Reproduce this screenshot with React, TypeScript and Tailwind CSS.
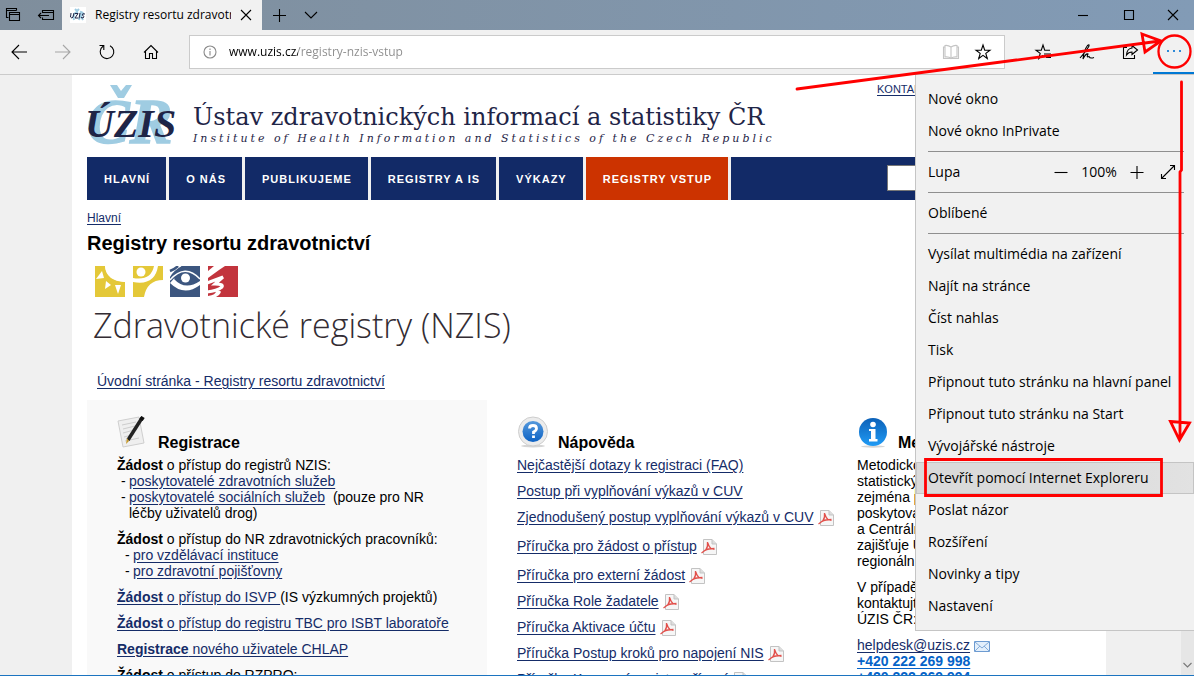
import React from "react";

const ui = "font-['Open_Sans','Noto_Sans',sans-serif]";
const link = "text-[#152c68] underline underline-offset-2";

function Glyph({ children, size = 20, className = "" }: { children: React.ReactNode; size?: number; className?: string }) {
  return (
    <svg
      width={size}
      height={size}
      viewBox={`0 0 ${size} ${size}`}
      fill="none"
      stroke="currentColor"
      strokeWidth="1.1"
      className={`shrink-0 ${className}`}
      aria-hidden="true"
    >
      {children}
    </svg>
  );
}

function IconButton({ label, className = "", children }: { label: string; className?: string; children: React.ReactNode }) {
  return (
    <button type="button" aria-label={label} className={`flex shrink-0 items-center justify-center text-black ${className}`}>
      {children}
    </button>
  );
}

function TabBar() {
  return (
    <div className="flex h-[30px] shrink-0 items-stretch bg-linear-to-r from-[#7f8e9c] to-[#829bb6]">
      <IconButton label="Odložené karty" className="w-[26px]">
        <Glyph size={16}>
          <path d="M3.500 10.500H1.500V1.500H11.500V3.500M1.500 3.500H11.500" />
          <path d="M4.500 5.500H14.500V13.500H4.500ZM4.500 7.500H14.500" />
        </Glyph>
      </IconButton>
      <IconButton label="Odložit karty" className="w-[36px] pl-1">
        <Glyph size={18}>
          <path d="M5.500 7V4.500H16.500V13.500H5.500V11.500M5.500 6.500H16.500M12 9.500H1.500M4 7L1.500 9.500L4 12" />
        </Glyph>
      </IconButton>
      <div className="flex w-[200px] items-center bg-[#f1f1f1] pl-2 pr-[10px]">
        <svg width="16" height="16" viewBox="0 0 16 16" className="shrink-0" aria-hidden="true">
          <rect width="16" height="16" fill="#fff" />
          <path d="M5 2L7 4L9 2" stroke="#9fcce2" strokeWidth="2" fill="none" />
          <path d="M4 13Q2 6 8 5M9 13L11 5Q15 6 11 9L13 13" stroke="#9fcce2" strokeWidth="2" fill="none" />
          <path d="M1 6L.5 10Q2 12 3 10L4 6M5 6.500H8L5 11H8M10 6L9 11.500M15 7Q12 6 12.500 8Q15 10 13 11L11 10.500" stroke="#1f2547" fill="none" />
        </svg>
        <span className="ml-[9px] w-[136px] overflow-hidden whitespace-nowrap text-xs text-black">Registry resortu zdravotnictví</span>
        <IconButton label="Zavřít kartu" className="ml-auto w-3">
          <Glyph size={12}><path d="M1 1L11 11M11 1L1 11" /></Glyph>
        </IconButton>
      </div>
      <IconButton label="Nová karta" className="w-[34px]">
        <Glyph size={14}><path d="M7.500 1V14M1 7.500H14" /></Glyph>
      </IconButton>
      <IconButton label="Náhledy karet" className="w-[30px]">
        <Glyph size={14}><path d="M1 4L7 10L13 4" /></Glyph>
      </IconButton>
      <div className="ml-auto flex">
        <IconButton label="Minimalizovat" className="w-[46px]">
          <Glyph size={12}><path d="M1 6.500H11" /></Glyph>
        </IconButton>
        <IconButton label="Maximalizovat" className="w-[46px]">
          <Glyph size={12}><path d="M1.500 1.500H10.500V10.500H1.500Z" /></Glyph>
        </IconButton>
        <IconButton label="Zavřít" className="w-[42px]">
          <Glyph size={12}><path d="M1 1L11 11M11 1L1 11" /></Glyph>
        </IconButton>
      </div>
    </div>
  );
}

function Toolbar() {
  return (
    <div className="flex h-[45px] shrink-0 items-center border-b border-[#cbcbcb] bg-[#f1f1f1]">
      <IconButton label="Zpět" className="w-[41px] pr-[3px]">
        <Glyph size={18}><path d="M2 9H17M9 2L2 9L9 16" /></Glyph>
      </IconButton>
      <IconButton label="Vpřed" className="w-11">
        <Glyph size={18} className="text-[#a6a6a6]"><path d="M1 9H16M9 2L16 9L9 16" /></Glyph>
      </IconButton>
      <IconButton label="Aktualizovat" className="w-11">
        <Glyph size={18}><path d="M5 3.300A6.800 6.800 0 1 0 12 2.700M1.500 2.500H5.800V7" /></Glyph>
      </IconButton>
      <IconButton label="Domů" className="w-11">
        <Glyph size={18}><path d="M2 9.500L9 2.500L16 9.500M3.500 8V15.500H7.500V10.500H10.500V15.500H14.500V8" /></Glyph>
      </IconButton>
      <div className="ml-4 flex h-[34px] min-w-0 flex-1 items-center border border-[#cbcbcb] bg-white">
        <Glyph size={14} className="ml-[13px] text-[#8a8a8a]">
          <circle cx="7" cy="7" r="6" /><path d="M7 6V10.500M7 3.500V5" />
        </Glyph>
        <input
          type="text"
          aria-label="Adresa"
          defaultValue="www.uzis.cz/registry-nzis-vstup"
          className="ml-3 min-w-0 flex-1 bg-[linear-gradient(90deg,#000_69px,#8c8c8c_69px)] bg-clip-text text-xs text-transparent caret-black outline-none"
        />
        <IconButton label="Zobrazení pro čtení" className="w-8">
          <Glyph size={18} className="text-[#c4c4c4]">
            <path d="M9 4V15.500M9 4Q6 2 3 2.500V14Q7 13.500 9 15.500Q11 13.500 15 14V2.500Q12 2 9 4M3 4H1.500V15.500H16.500V4H15" />
          </Glyph>
        </IconButton>
        <IconButton label="Přidat k oblíbeným" className="mr-[5px] w-8">
          <Glyph size={18}><path d="M9 2L10.700 7.200H16L11.800 10.400L13.300 15.500L9 12.400L4.700 15.500L6.200 10.400L2 7.200H7.300Z" /></Glyph>
        </IconButton>
      </div>
      <div className="flex items-center self-stretch pl-4">
        <IconButton label="Centrum" className="w-11">
          <Glyph size={18}><path d="M16 7.200H10.700L9 2L7.300 7.200H2L6.200 10.400L4.700 15.500L9 12.400M10 11H17M12 14.500H17" /></Glyph>
        </IconButton>
        <IconButton label="Poznámky" className="w-11">
          <Glyph size={18}><path d="M2 15Q9 7 11 3Q11.500 1 9.500 2.500Q6 7 5 16Q8 10 10 11Q8 15 11 13.500Q12 16 16 14.500" /></Glyph>
        </IconButton>
        <IconButton label="Sdílet" className="w-11">
          <Glyph size={18}><path d="M5 4.500H1.500V15.500H12.500V12M10 2.500L15.500 7L10 11.500V9Q6.500 9 4.500 12Q5 5.500 10 5Z" /></Glyph>
        </IconButton>
        <button type="button" aria-label="Nastavení a další" className="mt-2 flex w-[41px] items-center justify-center self-stretch border-b-2 border-[#0078d4] pb-1 text-[#2f8ad8]">
          <Glyph size={16}><path d="M1 6H3M7 6H9M13 6H15" strokeWidth="2" /></Glyph>
        </button>
      </div>
    </div>
  );
}

function Brand() {
  return (
    <div className="flex pt-2">
      <svg width="96" height="64" viewBox="0 0 96 64" className="shrink-0" role="img" aria-label="ÚZIS ČR" fontFamily="Liberation Serif" fontWeight="700" fontStyle="italic">
        <text x="0" y="60" fontSize="64" fill="#9fcce2" stroke="#9fcce2" strokeWidth="1.5">CR</text>
        <path d="M23 2L31 15H37L45 2H39L34 8L30 2Z" fill="#9fcce2" />
        <text x="-2" y="54" fontSize="40" fill="#1f2547">ÚZIS</text>
      </svg>
      <div className="ml-[10px] whitespace-nowrap pt-[18px] font-['DejaVu_Serif',serif] text-[#1f2547]">
        <div className="text-2xl leading-8">Ústav zdravotnických informací a statistiky ČR</div>
        <div className="text-[11px] italic leading-3 tracking-[3px]">Institute of Health Information and Statistics of the Czech Republic</div>
      </div>
    </div>
  );
}

const nav = [
  { text: "HLAVNÍ" },
  { text: "O NÁS" },
  { text: "PUBLIKUJEME" },
  { text: "REGISTRY A IS" },
  { text: "VÝKAZY" },
  { text: "REGISTRY VSTUP", active: true },
];

function SiteNav() {
  return (
    <nav className="flex h-[43px] gap-[3px] bg-[#f1f1f1] text-[11px] font-bold tracking-[1px] text-white">
      {nav.map((n) => (
        <a key={n.text} href="#" className={`flex shrink-0 items-center pl-[17px] pr-4 ${n.active ? "bg-[#cc3300]" : "bg-[#122a67]"}`}>
          {n.text}
        </a>
      ))}
      <div className="flex flex-1 justify-end bg-[#122a67] py-2 pr-8">
        <input aria-label="Hledat" className="h-[26px] w-[172px] border border-[#777] bg-white" />
      </div>
    </nav>
  );
}

function Pictograms() {
  return (
    <svg width="144" height="31" viewBox="0 0 144 31" aria-hidden="true">
      <path d="M0 0H10Q11 14 30 16V31H0Z" fill="#e4c838" />
      <path d="M7 5L1 13L9 12ZM11 15L10 23L16 19ZM20 19L23 28L26 19Z" fill="#fff" />
      <path d="M10 0Q11 15 30 16V0Z" fill="#fff" />
      <path d="M38 0H68V14Q52 14 49 31H38Z" fill="#e4c838" />
      <circle cx="46" cy="6" r="4.500" fill="#fff" />
      <path d="M38 12Q56 15 59 0H63Q60 20 38 16Z" fill="#fff" />
      <path d="M75 0H105V31H75Z" fill="#3c567f" />
      <path d="M75 0H87Q79 4 75 11Z" fill="#fff" />
      <path d="M75 5Q80 3 83 0" stroke="#3c567f" strokeWidth="2.500" fill="none" />
      <path d="M87 0H105V11Q94 0 81 6Q84 2 87 0Z" fill="#3c567f" />
      <path d="M75 17Q82 9 79 13Q90 25 105 15V19Q89 31 75 17Z" fill="#fff" />
      <path d="M75 14Q90 -3 105 13" stroke="#fff" strokeWidth="1.500" fill="none" />
      <circle cx="90.500" cy="12" r="4.500" fill="#fff" />
      <path d="M113 0H143V31H113Z" fill="#c2343d" />
      <path d="M119 0H130L124 4L113 12V5Z" fill="#fff" />
      <path d="M112 17L128 11L120 18Q129 18 127 21Q122 25 112 26" stroke="#fff" strokeWidth="3" fill="none" />
      <path d="M121 25Q129 24 124 29L121 31H113V30Q121 29 121 25Z" fill="#fff" />
    </svg>
  );
}

function NoteIcon() {
  return (
    <svg width="30" height="34" viewBox="0 0 30 34" aria-hidden="true">
      <path d="M1 5L22 1L27 27L6 31Z" fill="#efefef" stroke="#cfcfcf" />
      <path d="M5 9L19 6M6 13L18 10M6 17L17 14M7 21L15 19M8 25L22 22" stroke="#cdcdcd" />
      <path d="M11 24L25 2" stroke="#222" strokeWidth="3.500" />
      <path d="M24 4L26 1" stroke="#111" strokeWidth="4" />
      <path d="M12 25L9 28L10 22Z" fill="#c69a2d" />
    </svg>
  );
}

function HelpIcon() {
  return (
    <svg width="32" height="34" viewBox="0 0 32 34" aria-hidden="true">
      <defs>
        <linearGradient id="helpFill" x1="0" y1="0" x2="0" y2="1">
          <stop offset="0" stopColor="#5599dc" /><stop offset="1" stopColor="#0d62c4" />
        </linearGradient>
      </defs>
      <ellipse cx="16" cy="30" rx="12" ry="1.500" fill="#d5d5d5" />
      <circle cx="16" cy="15.500" r="14.500" fill="#ececec" stroke="#cecece" />
      <circle cx="16" cy="15.500" r="10.500" fill="url(#helpFill)" />
      <path d="M12.500 12.500Q12.500 9.500 16 9.500Q19.500 9.500 19.500 12.500Q19.500 14.500 16.500 16V18M16.500 19.500V22" stroke="#fff" strokeWidth="2.800" fill="none" />
    </svg>
  );
}

function InfoIcon() {
  return (
    <svg width="32" height="32" viewBox="0 0 32 32" aria-hidden="true">
      <defs>
        <linearGradient id="infoFill" x1="0" y1="0" x2="0" y2="1">
          <stop offset="0" stopColor="#0c61b8" /><stop offset="1" stopColor="#209bf5" />
        </linearGradient>
      </defs>
      <ellipse cx="16" cy="30.500" rx="12" ry="1.200" fill="#d5d5d5" />
      <circle cx="16" cy="16" r="14" fill="url(#infoFill)" />
      <circle cx="16" cy="8.500" r="2.800" fill="#fff" />
      <path d="M12 13H18.500V23H20.500V25.500H12V23H14V15H12Z" fill="#fff" />
    </svg>
  );
}

function PdfIcon() {
  return (
    <svg width="16" height="16" viewBox="0 0 16 16" className="-my-1 ml-1 inline-block align-middle" aria-hidden="true">
      <path d="M2.500 .5H11L15.500 5V15.500H2.500Z" fill="#f6f6f6" stroke="#c3c3c3" />
      <path d="M11 .5V5H15.500" fill="#ddd" stroke="#c3c3c3" />
      <path d="M6.500 3Q7 8 5 10.500Q2 13 .5 14M6.800 4Q8 8 10 9.500L13.500 10.500M4 11.500Q7 9.500 13.500 9.500" fill="none" stroke="#e2504b" strokeWidth="1.300" />
    </svg>
  );
}

function Column({ icon, title, className, children }: { icon: React.ReactNode; title: string; className: string; children: React.ReactNode }) {
  return (
    <section className={className}>
      <div className="flex h-[57px] pt-4">
        <div className="w-[41px] shrink-0">{icon}</div>
        <h2 className="pt-4 text-base font-bold leading-[22px]">{title}</h2>
      </div>
      <div className="flex flex-col gap-[10px]">{children}</div>
    </section>
  );
}

function SubItem({ text, className, tail }: { text: string; className: string; tail?: string }) {
  return (
    <li className={`flex ${className}`}>
      <span className="w-2 shrink-0">-</span>
      <span><a href="#" className={link}>{text}</a>{tail}</span>
    </li>
  );
}

const guides = [
  { text: "Nejčastější dotazy k registraci (FAQ)" },
  { text: "Postup při vyplňování výkazů v CUV" },
  { text: "Zjednodušený postup vyplňování výkazů v CUV", pdf: true, roomy: true },
  { text: "Příručka pro žádost o přístup", pdf: true, roomy: true },
  { text: "Příručka pro externí žádost", pdf: true },
  { text: "Příručka Role žadatele", pdf: true },
  { text: "Příručka Aktivace účtu", pdf: true },
  { text: "Příručka Postup kroků pro napojení NIS", pdf: true },
  { text: "Příručka Kmenový registr zařízení", pdf: true },
];

function Page() {
  return (
    <main className="ml-[72px] mr-[75px] min-w-0 flex-1 overflow-hidden bg-white px-[15px] font-['Liberation_Sans',Arial,sans-serif] text-sm leading-4 text-black">
      <div className="flex h-[82px] justify-between">
        <Brand />
        <a href="#" className={`w-[214px] shrink-0 pt-[6px] text-[11px] ${link}`}>KONTAKTY</a>
      </div>
      <SiteNav />
      <div className="pt-[10px] text-xs leading-4"><a href="#" className={link}>Hlavní</a></div>
      <h1 className="pt-[5px] text-xl font-bold leading-6">Registry resortu zdravotnictví</h1>
      <div className="pl-2 pt-[11px]"><Pictograms /></div>
      <div className="whitespace-nowrap pl-[6px] pt-[2px] font-['Open_Sans',sans-serif] text-[34px] font-light leading-[52px] text-[#332c33]">Zdravotnické registry (NZIS)</div>
      <div className="pb-[11px] pl-[10px] pt-[22px]"><a href="#" className={link}>Úvodní stránka - Registry resortu zdravotnictví</a></div>
      <div className="flex items-stretch">
        <Column icon={<NoteIcon />} title="Registrace" className="w-[400px] shrink-0 bg-[#f9f9f9] pl-[30px]">
          <div>
            <p><b>Žádost</b> o přístup do registrů NZIS:</p>
            <ul>
              <SubItem className="pl-1" text="poskytovatelé zdravotních služeb" />
              <SubItem className="pl-1" text="poskytovatelé sociálních služeb" tail={"\u00a0 (pouze pro NR"} />
            </ul>
            <p className="pl-3">léčby uživatelů drog)</p>
          </div>
          <div>
            <p><b>Žádost</b> o přístup do NR zdravotnických pracovníků:</p>
            <ul>
              <SubItem className="pl-2" text="pro vzdělávací instituce" />
              <SubItem className="pl-2" text="pro zdravotní pojišťovny" />
            </ul>
          </div>
          <p><a href="#" className={link}><b>Žádost</b> o přístup do ISVP </a>(IS výzkumných projektů)</p>
          <p><a href="#" className={link}><b>Žádost</b> o přístup do registru TBC pro ISBT laboratoře</a></p>
          <p><a href="#" className={link}><b>Registrace</b> nového uživatele CHLAP</a></p>
          <p><b>Žádost</b> o přístup do RZPRO:</p>
        </Column>
        <Column icon={<HelpIcon />} title="Nápověda" className="w-[340px] shrink-0 pl-[30px]">
          {guides.map((g) => (
            <p key={g.text} className={`whitespace-nowrap ${g.roomy ? "pb-[3px]" : ""}`}>
              <a href="#" className={link}>{g.text}</a>
              {g.pdf && <PdfIcon />}
            </p>
          ))}
        </Column>
        <Column icon={<InfoIcon />} title="Metodika" className="min-w-0 flex-1 whitespace-nowrap pl-[30px]">
          <p>
            Metodickou<br />statistických<br />zejména <mark className="bg-[#ffffb0] text-black">pro</mark><br />poskytovatele<br />a Centrální<br />zajišťuje ÚZIS<br />regionální
          </p>
          <p>V případě<br />kontaktujte<br />ÚZIS ČR:</p>
          <p>
            <a href="#" className={link}>helpdesk@uzis.cz</a>
            <svg width="16" height="11" viewBox="0 0 16 11" className="ml-1 inline-block" aria-hidden="true">
              <path d="M.5 .5H15.500V10.500H.5Z" fill="#e3effb" stroke="#6d9bd1" />
              <path d="M1 1L8 7L15 1M1 10L6 5M15 10L10 5" fill="none" stroke="#83abd9" />
            </svg>
            <br />
            <a href="#" className="font-bold text-[#0563c8] underline underline-offset-2">+420 222 269 998</a><br />
            <a href="#" className="font-bold text-[#0563c8] underline underline-offset-2">+420 222 269 994</a>
          </p>
        </Column>
      </div>
    </main>
  );
}

const menuItems = [
  "Vysílat multimédia na zařízení",
  "Najít na stránce",
  "Číst nahlas",
  "Tisk",
  "Připnout tuto stránku na hlavní panel",
  "Připnout tuto stránku na Start",
  "Vývojářské nástroje",
  "Otevřít pomocí Internet Exploreru",
  "Poslat názor",
  "Rozšíření",
  "Novinky a tipy",
  "Nastavení",
];

function MenuItem({ text }: { text: string }) {
  const hot = text.startsWith("Otevřít");
  return (
    <button
      type="button"
      className={`block h-8 w-full whitespace-nowrap pl-3 text-left ${hot ? "bg-linear-to-r from-[#dadada] via-[#dadada] to-[#e2e2e2] outline -outline-offset-1 outline-[#c4c4c4]" : ""}`}
    >
      {text}
    </button>
  );
}

function Separator() {
  return <hr className="my-1 ml-3 mr-[10px] border-[#8f8f8f]" />;
}

function SettingsMenu() {
  return (
    <div className="absolute right-0 top-[74px] w-[279px] border-b border-l border-t border-[#c5c5c5] bg-[#f1f1f1] py-2 text-sm text-black">
      <MenuItem text="Nové okno" />
      <MenuItem text="Nové okno InPrivate" />
      <Separator />
      <div className="flex h-8 items-center pl-3 pr-[17px]">
        <span>Lupa</span>
        <IconButton label="Oddálit" className="ml-auto w-5"><Glyph size={14}><path d="M.5 7.500H13.500" /></Glyph></IconButton>
        <span className="w-[56px] text-center">100%</span>
        <IconButton label="Přiblížit" className="w-5"><Glyph size={14}><path d="M.5 7.500H13.500M7 1V14" /></Glyph></IconButton>
        <IconButton label="Celá obrazovka" className="ml-3 w-[18px]">
          <Glyph size={16}><path d="M1.500 14.500L14.500 1.500M10 1.500H14.500V6M1.500 10V14.500H6" /></Glyph>
        </IconButton>
      </div>
      <Separator />
      <MenuItem text="Oblíbené" />
      <Separator />
      {menuItems.map((t) => <MenuItem key={t} text={t} />)}
    </div>
  );
}

function Annotations() {
  return (
    <svg width="400" height="500" viewBox="794 0 400 500" className="pointer-events-none absolute right-0 top-0" fill="none" stroke="#ff0000" strokeWidth="2.800" strokeLinecap="round" aria-hidden="true">
      <path d="M797 89L1160 41M1142 34L1161 41L1145 52Z" />
      <circle cx="1174.500" cy="51.500" r="16" strokeWidth="2.300" />
      <path d="M1181.500 82V170L1180 172V438M1170.500 421.500L1189.500 423L1179.500 440Z" />
      <path d="M925.500 459.500H1161.500V495.500H925.500Z" strokeLinecap="butt" />
    </svg>
  );
}

export default function App() {
  return (
    <div className={`relative flex h-screen flex-col overflow-hidden border-b border-[#1c74c0] bg-[#f0f0f0] ${ui}`}>
      <TabBar />
      <Toolbar />
      <div className="flex min-h-0 flex-1">
        <Page />
        <div className="flex w-[13px] shrink-0 flex-col items-center justify-end bg-[#e6e6e6] pb-[5px] text-[#777]">
          <Glyph size={9}><path d="M.5 2L4.500 6L8.500 2" /></Glyph>
        </div>
      </div>
      <SettingsMenu />
      <Annotations />
    </div>
  );
}
